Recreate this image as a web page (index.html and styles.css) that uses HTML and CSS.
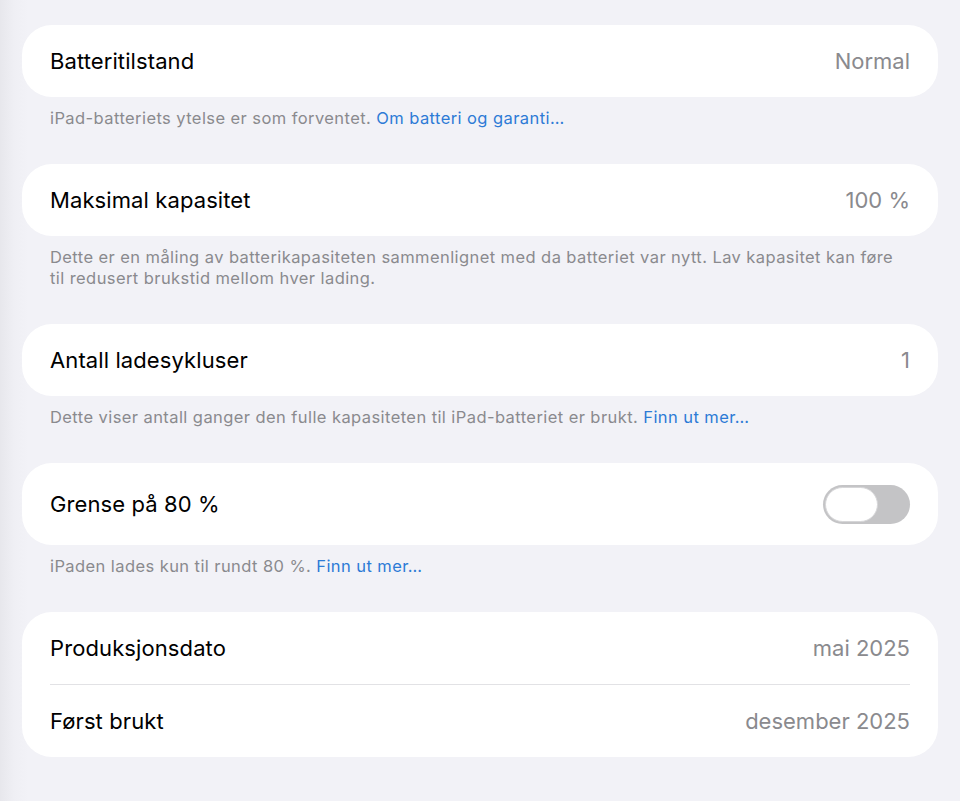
FILE: index.html
```html
<!DOCTYPE html>
<html lang="no">
<head>
<meta charset="utf-8">
<title>Batteritilstand</title>
<link rel="stylesheet" href="styles.css">
</head>
<body>
<main class="page">
  <section class="group">
    <div class="card">
      <div class="row"><span class="label">Batteritilstand</span><span class="value">Normal</span></div>
    </div>
    <p class="footer">iPad-batteriets ytelse er som forventet. <span class="link">Om batteri og garanti…</span></p>
  </section>
  <section class="group">
    <div class="card">
      <div class="row"><span class="label">Maksimal kapasitet</span><span class="value">100 %</span></div>
    </div>
    <p class="footer">Dette er en måling av batterikapasiteten sammenlignet med da batteriet var nytt. Lav kapasitet kan føre til redusert brukstid mellom hver lading.</p>
  </section>
  <section class="group">
    <div class="card">
      <div class="row"><span class="label">Antall ladesykluser</span><span class="value">1</span></div>
    </div>
    <p class="footer">Dette viser antall ganger den fulle kapasiteten til iPad-batteriet er brukt. <span class="link">Finn ut mer…</span></p>
  </section>
  <section class="group">
    <div class="card">
      <div class="row row-toggle"><span class="label">Grense på 80 %</span><span class="toggle"><span class="knob"></span></span></div>
    </div>
    <p class="footer">iPaden lades kun til rundt 80 %. <span class="link">Finn ut mer…</span></p>
  </section>
  <section class="group">
    <div class="card">
      <div class="row"><span class="label">Produksjonsdato</span><span class="value">mai 2025</span></div>
      <div class="sep"></div>
      <div class="row"><span class="label">Først brukt</span><span class="value">desember 2025</span></div>
    </div>
  </section>
</main>
</body>
</html>
```
FILE: styles.css
```css
html, body {
  margin: 0;
  padding: 0;
}
body {
  width: 960px;
  height: 801px;
  overflow: hidden;
  background: linear-gradient(to right, #e7e7ec 0px, #efeff4 14px, #f2f2f7 28px);
  font-family: Inter, "Noto Sans", "Liberation Sans", sans-serif;
  -webkit-font-smoothing: antialiased;
}
.page {
  padding: 25px 22px 0 22px;
  display: flex;
  flex-direction: column;
}
.group {
  margin-bottom: 35px;
}
.card {
  background: #ffffff;
  border-radius: 30px;
  padding: 0 28px;
  display: flex;
  flex-direction: column;
}
.row {
  height: 72px;
  display: flex;
  align-items: center;
  justify-content: space-between;
}
.row-toggle {
  height: 82px;
}
.label {
  font-size: 22px;
  color: #000000;
  letter-spacing: 0.1px;
}
.value {
  font-size: 22px;
  color: #8a8a8e;
  letter-spacing: 0;
}
.sep {
  height: 1px;
  background: #e2e2e5;
}
.footer {
  margin: 11px 0 0 0;
  padding: 0 28px;
  font-size: 16.5px;
  line-height: 21px;
  letter-spacing: 0.42px;
  color: #8a8a8e;
}
.link {
  color: #2d7bd6;
}
.toggle {
  width: 87px;
  height: 39px;
  border-radius: 20px;
  background: #c4c4c6;
  display: flex;
  align-items: center;
  padding: 0 2px;
  box-sizing: border-box;
}
.knob {
  width: 53px;
  height: 35px;
  border-radius: 18px;
  background: #ffffff;
  box-sizing: border-box;
  border: 1px solid #d6d6d8;
}
```
